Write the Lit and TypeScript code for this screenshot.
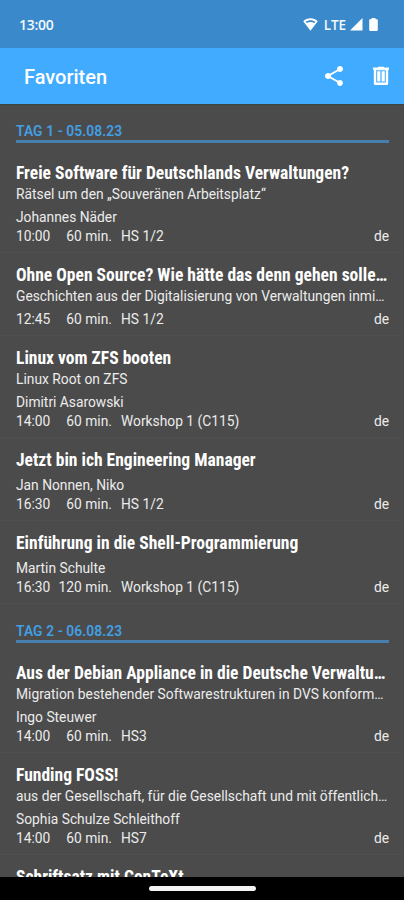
import { LitElement, html, css, nothing } from "lit";
import { customElement, property } from "lit/decorators.js";

interface Session {
  title: string;
  subtitle?: string;
  speakers?: string;
  time?: string;
  duration?: string;
  room?: string;
}

interface Day {
  label: string;
  sessions: Session[];
}

const days: Day[] = [
  {
    label: "TAG 1 - 05.08.23",
    sessions: [
      { title: "Freie Software für Deutschlands Verwaltungen?", subtitle: "Rätsel um den „Souveränen Arbeitsplatz“", speakers: "Johannes Näder", time: "10:00", duration: "60 min.", room: "HS 1/2" },
      { title: "Ohne Open Source? Wie hätte das denn gehen solle…", subtitle: "Geschichten aus der Digitalisierung von Verwaltungen inmi…", time: "12:45", duration: "60 min.", room: "HS 1/2" },
      { title: "Linux vom ZFS booten", subtitle: "Linux Root on ZFS", speakers: "Dimitri Asarowski", time: "14:00", duration: "60 min.", room: "Workshop 1 (C115)" },
      { title: "Jetzt bin ich Engineering Manager", speakers: "Jan Nonnen, Niko", time: "16:30", duration: "60 min.", room: "HS 1/2" },
      { title: "Einführung in die Shell-Programmierung", speakers: "Martin Schulte", time: "16:30", duration: "120 min.", room: "Workshop 1 (C115)" },
    ],
  },
  {
    label: "TAG 2 - 06.08.23",
    sessions: [
      { title: "Aus der Debian Appliance in die Deutsche Verwaltu…", subtitle: "Migration bestehender Softwarestrukturen in DVS konform…", speakers: "Ingo Steuwer", time: "14:00", duration: "60 min.", room: "HS3" },
      { title: "Funding FOSS!", subtitle: "aus der Gesellschaft, für die Gesellschaft und mit öffentlich…", speakers: "Sophia Schulze Schleithoff", time: "14:00", duration: "60 min.", room: "HS7" },
      { title: "Schriftsatz mit ConTeXt" },
    ],
  },
];

@customElement("session-item")
export class SessionItem extends LitElement {
  @property({ attribute: false }) session!: Session;

  static styles = css`
    :host {
      display: block;
      box-sizing: border-box;
      padding: 10px 15px 7px 16px;
      white-space: nowrap;
      color: #ececec;
      font-size: 13.8px;
      line-height: 19px;
      box-shadow: inset 0 -1px #4f4f4f;
    }
    .title {
      color: #fff;
      font-family: "Roboto Condensed", Roboto, sans-serif;
      font-stretch: 75%;
      font-weight: 700;
      font-size: 17.55px;
      line-height: 24px;
    }
    .details { margin-top: 4px; }
    .meta { display: grid; grid-template-columns: 36px 60px 1fr auto; }
    .duration { text-align: right; }
    .room { padding-left: 9px; }
  `;

  render() {
    const s = this.session;
    return html`
      <div class="title">${s.title}</div>
      ${s.subtitle ? html`<div class="subtitle">${s.subtitle}</div>` : nothing}
      ${s.time
        ? html`<div class="details">
            ${s.speakers ? html`<div class="speakers">${s.speakers}</div>` : nothing}
            <div class="meta">
              <span>${s.time}</span>
              <span class="duration">${s.duration}</span>
              <span class="room">${s.room}</span>
              <span>de</span>
            </div>
          </div>`
        : nothing}
    `;
  }
}

@customElement("app-root")
export class AppRoot extends LitElement {
  static styles = css`
    :host {
      display: flex;
      flex-direction: column;
      height: 900px;
      overflow: hidden;
      background: #4b4b4b;
      font-family: Roboto, sans-serif;
    }
    .status {
      flex: none;
      display: flex;
      align-items: center;
      height: 48px;
      box-sizing: border-box;
      padding: 1px 26px 0 19px;
      background: #3989cb;
      color: #f4f9fd;
      font-family: "Open Sans", sans-serif;
      font-weight: 600;
    }
    .clock { flex: 1; font-size: 14px; letter-spacing: -0.3px; }
    .lte { margin: 0 4px 0 6px; font-size: 13.5px; letter-spacing: -0.1px; }
    .status svg { display: block; fill: #fff; }
    .battery { margin-left: 6px; }
    .bar {
      flex: none;
      display: flex;
      align-items: center;
      height: 56px;
      box-sizing: border-box;
      padding: 0 12px 0 24px;
      background: #40abff;
      box-shadow: 0 1px 1px #3c4440;
      z-index: 1;
      color: #fff;
    }
    .heading { flex: 1; margin: 2px 0 0; font-size: 20px; font-weight: 500; }
    .bar svg { display: block; fill: #fff; }
    .trash { margin-left: 24px; }
    .list { flex: 1; min-height: 0; overflow: hidden; }
    .day {
      height: 47px;
      box-sizing: border-box;
      padding: 18px 15px 0 16px;
      color: #439fe3;
      font-size: 13.8px;
      font-weight: 600;
      letter-spacing: 0.1px;
      line-height: 18px;
    }
    .label { height: 18px; border-bottom: 3px solid #477fae; }
    .nav {
      flex: none;
      display: flex;
      align-items: center;
      justify-content: center;
      height: 23px;
      background: #000;
    }
    .pill { width: 107px; height: 5px; border-radius: 3px; background: #f3f3f3; }
  `;

  render() {
    return html`
      <div class="status">
        <span class="clock">13:00</span>
        <svg width="15" height="13" viewBox="0 0 15 13">
          <path fill-rule="evenodd" d="M7.500.3C4.600.3 2 1.400.2 3.200L7.500 12.700l7.300-9.500C13 1.400 10.400.3 7.500.3zM2.600 3.700C5.200 1.600 9.800 1.600 12.400 3.700L11.300 5.100C9.200 3.600 5.800 3.600 3.700 5.100z" />
        </svg>
        <span class="lte">LTE</span>
        <svg width="13" height="13" viewBox="0 0 13 13"><path d="M12.500 0v12.500H0z" /></svg>
        <svg class="battery" width="9" height="13" viewBox="0 0 9 13">
          <path d="M2.500 0h4v1.300H8a.8.8 0 0 1 .8.8v10a.8.8 0 0 1-.8.800H1a.8.8 0 0 1-.8-.8v-10a.8.8 0 0 1 .8-.8h1.500z" />
        </svg>
      </div>
      <div class="bar">
        <h1 class="heading">Favoriten</h1>
        <svg width="24" height="24" viewBox="0 0 24 24">
          <path d="M18 16.080c-.76 0-1.440.3-1.960.77L8.910 12.700c.05-.23.09-.46.09-.7s-.04-.47-.09-.7l7.050-4.110c.54.5 1.250.81 2.040.81 1.660 0 3-1.340 3-3s-1.340-3-3-3-3 1.340-3 3c0 .24.04.47.09.7L8.040 9.810C7.500 9.310 6.790 9 6 9c-1.660 0-3 1.340-3 3s1.340 3 3 3c.79 0 1.500-.31 2.040-.81l7.120 4.160c-.05.21-.08.43-.08.65 0 1.610 1.310 2.920 2.920 2.920s2.920-1.310 2.920-2.920-1.310-2.920-2.920-2.920z" />
        </svg>
        <svg class="trash" width="22" height="22" viewBox="0 0 22 22">
          <path fill-rule="evenodd" d="M3 2.500h5V1.800h6v.7h5v2.300h-.8V18.500a1.500 1.500 0 0 1-1.500 1.500H5.300a1.500 1.500 0 0 1-1.500-1.500V4.800H3zM6.200 5.200v12.400h9.600V5.200zM7.200 6.200h3.200v10.400H7.200zM11.600 6.200h3.200v10.400h-3.200z" />
        </svg>
      </div>
      <div class="list">
        ${days.map(
          (d) => html`
            <div class="day"><div class="label">${d.label}</div></div>
            ${d.sessions.map((s) => html`<session-item .session=${s}></session-item>`)}
          `,
        )}
      </div>
      <div class="nav"><div class="pill"></div></div>
    `;
  }
}
